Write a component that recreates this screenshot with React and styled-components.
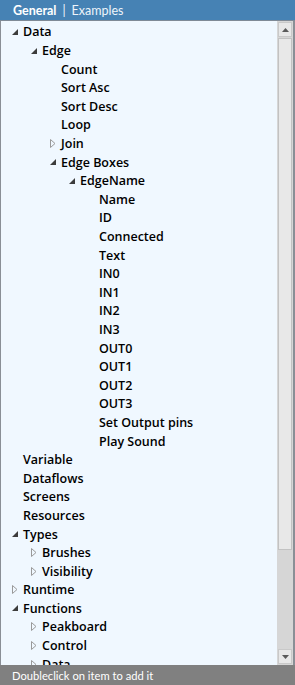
import React from "react";
import styled, { createGlobalStyle } from "styled-components";

const Global = createGlobalStyle`
  html, body { margin: 0; padding: 0; background: #ffffff; }
  body { font-family: "Open Sans", "Noto Sans", sans-serif; }
`;

const Panel = styled.div`
  width: 295px;
  height: 685px;
  display: flex;
  flex-direction: column;
  box-sizing: border-box;
  overflow: hidden;
`;

const Header = styled.div`
  height: 20px;
  flex: none;
  background: #4682b4;
  display: flex;
  align-items: center;
  padding-left: 13px;
  gap: 6px;
  font-family: "Lato", "Open Sans", sans-serif;
  font-size: 12.5px;
  color: #ffffff;
  border-bottom: 1px solid #7f8a96;
`;

const Tab = styled.span`
  font-weight: ${(p) => (p.$active ? 700 : 400)};
  color: ${(p) => (p.$active ? "#ffffff" : "#eef4fa")};
`;

const Body = styled.div`
  flex: 1;
  min-height: 0;
  display: flex;
  border-left: 1px solid #8a8f96;
  border-right: 2px solid #8a8f96;
  background: #f0f8ff;
`;

const Tree = styled.div`
  flex: 1;
  min-width: 0;
  overflow: hidden;
  padding-top: 1.7px;
`;

const Row = styled.div`
  height: 18.6px;
  display: flex;
  align-items: center;
  padding-left: ${(p) => 6 + p.$level * 19}px;
  font-size: 12.5px;
  font-weight: 600;
  color: #000000;
  white-space: nowrap;
`;

const Expander = styled.span`
  width: 16px;
  height: 18px;
  flex: none;
  display: flex;
  align-items: center;
  justify-content: center;
`;

const Scrollbar = styled.div`
  width: 16px;
  flex: none;
  background: #d6d6d6;
  display: flex;
  flex-direction: column;
  padding: 1px 0 1px 0;
  box-sizing: border-box;
`;

const ScrollButton = styled.div`
  height: 15px;
  margin: 0 1px;
  background: #e8e8e8;
  border: 1px solid #c9c9c9;
  box-sizing: border-box;
  display: flex;
  align-items: center;
  justify-content: center;
  flex: none;
`;

const Thumb = styled.div`
  height: 512px;
  margin: 1px 1px 0;
  background: #e8e8e8;
  border: 1px solid #c2c2c2;
  box-sizing: border-box;
  flex: none;
`;

const Track = styled.div`
  flex: 1;
`;

const Footer = styled.div`
  height: 20px;
  flex: none;
  background: #808080;
  color: #ffffff;
  font-family: "Lato", "Open Sans", sans-serif;
  font-size: 11.2px;
  display: flex;
  align-items: center;
  padding-left: 12px;
`;

const ExpandedIcon = () => (
  <svg width="6" height="6" viewBox="0 0 6 6">
    <polygon points="6,0 6,6 0,6" fill="#3c3c3c" />
  </svg>
);

const CollapsedIcon = () => (
  <svg width="6" height="9" viewBox="0 0 6 9">
    <polygon points="0.5,0.5 5,4.5 0.5,8.5" fill="none" stroke="#9a9a9a" strokeWidth="1" />
  </svg>
);

const UpArrow = () => (
  <svg width="7" height="4" viewBox="0 0 7 4">
    <polygon points="0,4 7,4 3.5,0" fill="#5a5a5a" />
  </svg>
);

const DownArrow = () => (
  <svg width="7" height="4" viewBox="0 0 7 4">
    <polygon points="0,0 7,0 3.5,4" fill="#5a5a5a" />
  </svg>
);

const rows = [
  ["Data", 0, "open"],
  ["Edge", 1, "open"],
  ["Count", 2],
  ["Sort Asc", 2],
  ["Sort Desc", 2],
  ["Loop", 2],
  ["Join", 2, "closed"],
  ["Edge Boxes", 2, "open"],
  ["EdgeName", 3, "open"],
  ["Name", 4],
  ["ID", 4],
  ["Connected", 4],
  ["Text", 4],
  ["IN0", 4],
  ["IN1", 4],
  ["IN2", 4],
  ["IN3", 4],
  ["OUT0", 4],
  ["OUT1", 4],
  ["OUT2", 4],
  ["OUT3", 4],
  ["Set Output pins", 4],
  ["Play Sound", 4],
  ["Variable", 0],
  ["Dataflows", 0],
  ["Screens", 0],
  ["Resources", 0],
  ["Types", 0, "open"],
  ["Brushes", 1, "closed"],
  ["Visibility", 1, "closed"],
  ["Runtime", 0, "closed"],
  ["Functions", 0, "open"],
  ["Peakboard", 1, "closed"],
  ["Control", 1, "closed"],
  ["Data", 1, "closed"],
];

export default function App() {
  return (
    <>
      <Global />
      <Panel>
        <Header>
          <Tab $active>General</Tab>
          <Tab>|</Tab>
          <Tab>Examples</Tab>
        </Header>
        <Body>
          <Tree>
            {rows.map(([label, level, state], i) => (
              <Row key={i} $level={level}>
                <Expander>
                  {state === "open" && <ExpandedIcon />}
                  {state === "closed" && <CollapsedIcon />}
                </Expander>
                {label}
              </Row>
            ))}
          </Tree>
          <Scrollbar>
            <ScrollButton>
              <UpArrow />
            </ScrollButton>
            <Thumb />
            <Track />
            <ScrollButton>
              <DownArrow />
            </ScrollButton>
          </Scrollbar>
        </Body>
        <Footer>Doubleclick on item to add it</Footer>
      </Panel>
    </>
  );
}
